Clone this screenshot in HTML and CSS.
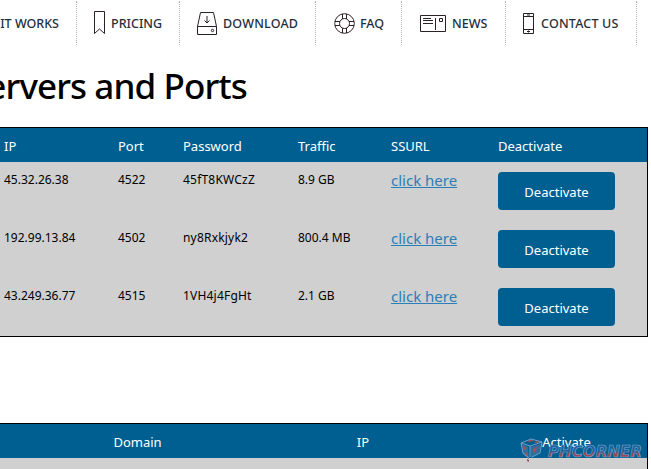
FILE: index.html
```html
<!DOCTYPE html>
<html lang="en">
<head>
    <meta charset="UTF-8">
    <meta name="viewport" content="width=device-width, initial-scale=1.0">
    <title>Servers and Ports</title>
    <link rel="stylesheet" href="styles.css">
</head>

<body>
    <nav class="menu">
        <a class="menu-item item-works"><span class="label">HOW IT WORKS</span></a>
        <a class="menu-item item-pricing">
            <svg class="icon" width="12" height="24" viewBox="0 0 12 24"><path d="M.5.5h10v22L5.500 18 .5 22.500z"/></svg>
            <span class="label">PRICING</span>
        </a>
        <a class="menu-item item-download">
            <svg class="icon" width="20" height="23" viewBox="0 0 20 23"><path d="M3.500.5h13l3 14v8H.5v-8zM.5 14.500h19M10 4v7M7.500 8.500L10 11l2.500-2.500"/><circle cx="15.500" cy="18.500" r="1.200"/></svg>
            <span class="label">DOWNLOAD</span>
        </a>
        <a class="menu-item item-faq">
            <svg class="icon" width="21" height="21" viewBox="0 0 21 21"><circle cx="10.500" cy="10.500" r="9.800"/><circle cx="10.500" cy="10.500" r="5"/><path d="M8.500.9v5M12.500.9v5M8.500 15v5M12.500 15v5M.9 8.500h5M.9 12.500h5M15 8.500h5M15 12.500h5"/></svg>
            <span class="label">FAQ</span>
        </a>
        <a class="menu-item item-news">
            <svg class="icon" width="26" height="17" viewBox="0 0 26 17"><path d="M.5.5h25v16H.5zM3 3.500h8M3 5.500h10M3 8.500h10M15.500 3v12M19.500 3.500h3v3h-3z"/></svg>
            <span class="label">NEWS</span>
        </a>
        <a class="menu-item item-contact">
            <svg class="icon" width="11" height="21" viewBox="0 0 11 21"><path d="M.5.5h10v20H.5zM.5 3.500h10M.5 16.500h10M4 2h3M4 18.500h3M5.500 17.500v2"/></svg>
            <span class="label">CONTACT US</span>
        </a>
    </nav>

    <div class="title-bar">
        <h1>Servers and Ports</h1>
    </div>

    <table class="table servers">
        <thead>
            <tr>
                <th class="col-ip">IP</th>
                <th class="col-port">Port</th>
                <th class="col-password">Password</th>
                <th class="col-traffic">Traffic</th>
                <th class="col-url">SSURL</th>
                <th>Deactivate</th>
            </tr>
        </thead>
        <tbody>
            <tr>
                <td>45.32.26.38</td>
                <td>4522</td>
                <td class="pass">45fT8KWCzZ</td>
                <td>8.9 GB</td>
                <td><a class="link" href="#">click here</a></td>
                <td><button class="button">Deactivate</button></td>
            </tr>
            <tr>
                <td>192.99.13.84</td>
                <td>4502</td>
                <td class="pass">ny8Rxkjyk2</td>
                <td>800.4 MB</td>
                <td><a class="link" href="#">click here</a></td>
                <td><button class="button">Deactivate</button></td>
            </tr>
            <tr>
                <td>43.249.36.77</td>
                <td>4515</td>
                <td class="pass">1VH4j4FgHt</td>
                <td>2.1 GB</td>
                <td><a class="link" href="#">click here</a></td>
                <td><button class="button">Deactivate</button></td>
            </tr>
        </tbody>
    </table>

    <div class="domains-wrap">
        <table class="table domains">
            <thead>
                <tr>
                    <th class="col-domain">Domain</th>
                    <th class="col-domain-ip">IP</th>
                    <th class="col-activate">Activate</th>
                </tr>
            </thead>
            <tbody>
                <tr><td colspan="3"></td></tr>
            </tbody>
        </table>
        <svg class="watermark" width="124" height="26" viewBox="0 0 124 26">
            <defs>
                <linearGradient id="mark" x1="0" y1="0" x2="0" y2="1">
                    <stop offset="0.45" stop-color="#1d639a"/>
                    <stop offset="0.6" stop-color="#9a4551"/>
                </linearGradient>
            </defs>
            <path class="cube-side" d="M1 5l7 4 1 12-6-5zM10 9l11-3-2 9-8 5z"/>
            <path class="cube-red" d="M7 3l4-1.500 3 1-4 1.500zM14 4l4-1 2 1-4 1zM3 8l3 1.500v3l-2-1zM5 14l3 2v4l-2-2zM13 11l4-2-1 4-3 2zM7 21l2 1v2l-2-1z"/>
            <path class="cube-line" d="M1 5l10-4 11 3-12 4zM1 5l2 10 6 5M10 8v11M12 19l8-4 2-11"/>
            <text x="28" y="19" textLength="94" lengthAdjust="spacingAndGlyphs">PHCORNER</text>
        </svg>
    </div>
</body>
</html>
```
FILE: styles.css
```css
* {
    box-sizing: border-box;
}

body {
    margin: 0;
    height: 469px;
    overflow: hidden;
    background: #fff;
    color: #000;
    font-family: "Noto Sans", "Open Sans", sans-serif;
}

.menu {
    display: flex;
    height: 45px;
    padding-top: 1px;
}

.menu-item {
    display: flex;
    align-items: center;
    flex: none;
    height: 44px;
    border-right: 1px dotted #b5b5b5;
    color: #1f2f3c;
    font-size: 12.5px;
    font-weight: 500;
    white-space: nowrap;
}

.item-works {
    width: 77px;
    justify-content: flex-end;
    padding-right: 17px;
}

.item-pricing {
    width: 103px;
    padding-left: 17px;
    gap: 5px;
}

.item-download {
    width: 136px;
    padding-left: 17px;
    gap: 6px;
    letter-spacing: 0.2px;
}

.item-faq {
    width: 86px;
    padding-left: 18px;
    gap: 5px;
}

.item-news {
    width: 104px;
    padding-left: 18px;
    gap: 6px;
}

.item-contact {
    width: 131px;
    padding-left: 17px;
    gap: 7px;
    letter-spacing: 0.2px;
}

.icon {
    flex: none;
    fill: none;
    stroke: #2b2024;
    stroke-width: 1;
}

.title-bar {
    display: flex;
    justify-content: flex-end;
    width: 247px;
    height: 82px;
}

h1 {
    margin: 16px 0 0;
    font-size: 35px;
    font-weight: 500;
    letter-spacing: -0.9px;
    line-height: 50px;
    white-space: nowrap;
}

.table {
    width: 648px;
    table-layout: fixed;
    border-spacing: 0;
    border: 1px solid #000;
    border-left: none;
    background: #d0d0d0;
}

.table th {
    height: 34px;
    padding: 1px 0 0 4px;
    background: #005f91;
    color: #fff;
    font-size: 13px;
    font-weight: 400;
    line-height: 20px;
    text-align: left;
}

.table td {
    height: 58px;
    padding: 10px 0 0 4px;
    font-size: 12px;
    line-height: 16px;
    vertical-align: top;
}

.table .pass {
    letter-spacing: 0.2px;
}

.col-ip { width: 114px; }
.col-port { width: 65px; }
.col-password { width: 115px; }
.col-traffic { width: 93px; }
.col-url { width: 107px; }

.link {
    display: block;
    margin-top: -2px;
    color: #2b7fb8;
    font-size: 15px;
    line-height: 20px;
}

.button {
    display: block;
    width: 117px;
    height: 38px;
    padding: 2px 0 0;
    border: none;
    border-radius: 4px;
    background: #005f91;
    color: #fff;
    font-family: inherit;
    font-size: 13px;
}

.domains-wrap {
    position: relative;
    height: 46px;
    margin-top: 86px;
    overflow: hidden;
}

.table.domains th {
    padding-left: 0;
    text-align: center;
}

.col-domain { width: 275px; }
.col-domain-ip { width: 176px; }

.table.domains .col-activate {
    padding-left: 35px;
}

.watermark {
    position: absolute;
    left: 520px;
    top: 15px;
}

.watermark text {
    fill: url(#mark);
    stroke: #76a9d3;
    stroke-width: 0.6;
    font-family: "DejaVu Sans", sans-serif;
    font-size: 15px;
    font-weight: 700;
    font-style: italic;
}

.cube-side {
    fill: #346d9d;
}

.cube-red {
    fill: #a84d50;
}

.cube-line {
    fill: none;
    stroke: #6f9fc8;
}
```
